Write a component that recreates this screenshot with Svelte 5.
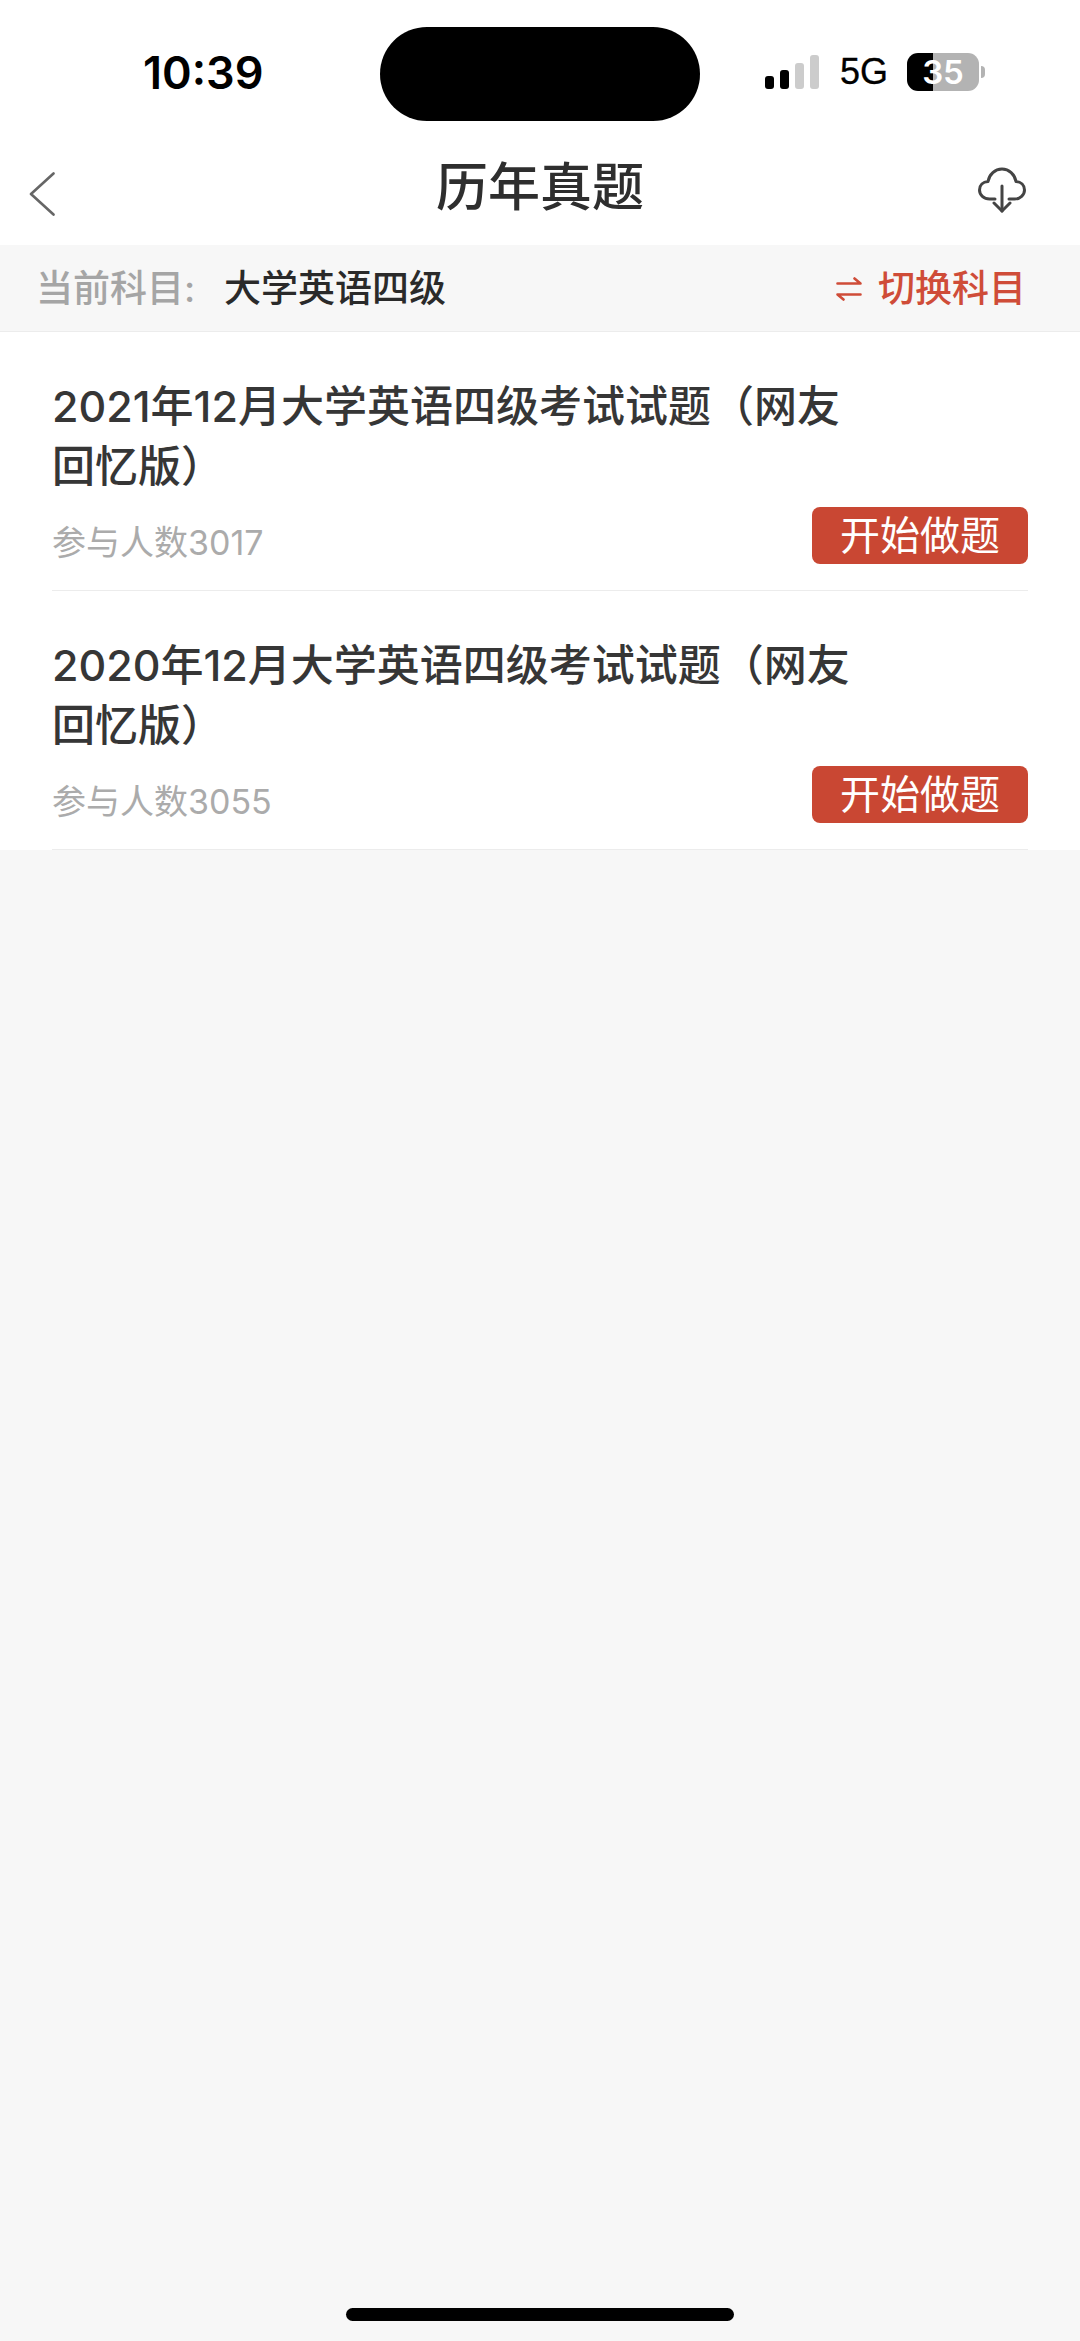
<script>
  const papers = [
    { title: '2021年12月大学英语四级考试试题（网友回忆版）', count: 3017 },
    { title: '2020年12月大学英语四级考试试题（网友回忆版）', count: 3055 }
  ];
</script>

<div class="page">
  <header class="status">
    <span class="time">10:39</span>
    <div class="island"></div>
    <div class="indicators">
      <div class="signal">
        <i class="b1 on"></i><i class="b2 on"></i><i class="b3"></i><i class="b4"></i>
      </div>
      <span class="net">5G</span>
      <div class="battery"><span>35</span></div>
      <div class="nub"></div>
    </div>
  </header>

  <nav class="nav">
    <svg class="back" width="26" height="44" viewBox="0 0 26 44" fill="none">
      <path d="M24.5 1.5 L2 22 L24.5 42.5" stroke="#666" stroke-width="2.6" stroke-linecap="round" stroke-linejoin="round" />
    </svg>
    <h1>历年真题</h1>
    <svg class="cloud" width="48" height="46" viewBox="0 0 48 46" fill="none" stroke="#444" stroke-width="3" stroke-linecap="round" stroke-linejoin="round">
      <path d="M17 32 H11.5 C5.8 32 1.5 28 1.5 23 C1.5 18.2 5 14.8 10 14.5 C11.2 7.2 17 2 24 2 C31 2 36.8 7.2 38 14.5 C43 14.8 46.5 18.2 46.5 23 C46.5 28 42.2 32 36.5 32 H31" />
      <path d="M24 19 V44" />
      <path d="M16 36 L24 44 L32 36" />
    </svg>
  </nav>

  <div class="subject">
    <span class="label">当前科目:</span>
    <span class="current">大学英语四级</span>
    <span class="switch">
      <svg width="26" height="24" viewBox="0 0 26 24" fill="none" stroke="#cf4c38" stroke-width="2.6" stroke-linecap="round" stroke-linejoin="round">
        <path d="M1.5 6.5 H24.5 L18.5 1.5" />
        <path d="M24.5 17.5 H1.5 L7.5 22.5" />
      </svg>
      切换科目
    </span>
  </div>

  <ul class="list">
    {#each papers as p}
      <li class="row">
        <div class="title">{p.title}</div>
        <div class="meta">
          <span class="count">参与人数{p.count}</span>
          <button class="start">开始做题</button>
        </div>
      </li>
    {/each}
  </ul>

  <div class="home"></div>
</div>

<style>
  :global(body) {
    margin: 0;
    background: #f7f7f7;
  }
  .page {
    width: 1080px;
    height: 2341px;
    display: flex;
    flex-direction: column;
    background: #f7f7f7;
    font-family: Inter, "Noto Sans CJK SC", sans-serif;
    overflow: hidden;
  }
  .status {
    height: 121px;
    background: #fff;
    position: relative;
    display: flex;
    align-items: flex-start;
    justify-content: space-between;
  }
  .time {
    margin: 47px 0 0 143px;
    font-size: 45px;
    line-height: 52px;
    font-weight: 600;
    color: #000;
  }
  .island {
    position: absolute;
    left: 380px;
    top: 27px;
    width: 320px;
    height: 94px;
    border-radius: 47px;
    background: #000;
  }
  .indicators {
    display: flex;
    align-items: flex-start;
    margin: 53px 95px 0 0;
  }
  .signal {
    display: flex;
    align-items: flex-end;
    gap: 6px;
    height: 34px;
    margin: 2px 21px 0 0;
  }
  .signal i {
    width: 9px;
    border-radius: 3px;
    background: #ccc;
  }
  .signal i.on { background: #000; }
  .b1 { height: 13px; }
  .b2 { height: 19px; }
  .b3 { height: 26px; }
  .b4 { height: 34px; }
  .net {
    font-family: "Liberation Sans", sans-serif;
    font-size: 36px;
    line-height: 38px;
    color: #000;
    margin-right: 19px;
    -webkit-text-stroke: 0.3px #000;
  }
  .battery {
    width: 72px;
    height: 38px;
    border-radius: 11px;
    background: linear-gradient(90deg, #000 36%, #b3b3b3 36%);
    display: flex;
    align-items: center;
    justify-content: center;
  }
  .battery span {
    font-size: 33px;
    line-height: 38px;
    font-weight: 600;
    color: #fff;
  }
  .nub {
    width: 4px;
    height: 12px;
    margin: 13px 0 0 2px;
    border-radius: 0 6px 6px 0;
    background: #b3b3b3;
  }
  .nav {
    height: 124px;
    background: #fff;
    display: grid;
    grid-template-columns: 1fr auto 1fr;
    align-items: center;
  }
  .back {
    margin: 22px 0 0 29px;
  }
  .cloud {
    justify-self: end;
    margin: 13px 54px 0 0;
  }
  h1 {
    margin: 10px 0 0;
    font-size: 52px;
    line-height: 62px;
    font-weight: 500;
    color: #2e2e2e;
  }
  .subject {
    height: 87px;
    box-sizing: border-box;
    border-bottom: 1px solid #ececec;
    display: flex;
    align-items: center;
    padding: 2px 54px 0 36px;
    font-size: 37px;
    line-height: 44px;
    font-weight: 500;
    background: #f7f7f7;
  }
  .label {
    color: #a5a5a5;
    width: 188px;
    white-space: nowrap;
  }
  .current {
    color: #2a2a2a;
  }
  .switch {
    margin-left: auto;
    display: flex;
    align-items: center;
    gap: 16px;
    color: #cf4c38;
    white-space: nowrap;
  }
  .list {
    list-style: none;
    margin: 0;
    padding: 0 52px;
    background: #fff;
  }
  .row {
    height: 259px;
    box-sizing: border-box;
    border-bottom: 1px solid #ececec;
    padding-top: 44px;
  }
  .title {
    width: 820px;
    font-size: 43px;
    line-height: 60px;
    color: #363636;
    font-weight: 500;
  }
  .meta {
    display: flex;
    justify-content: space-between;
    align-items: flex-start;
    margin-top: 11px;
  }
  .count {
    font-size: 34px;
    line-height: 40px;
    color: #ababab;
    margin-top: 16px;
  }
  .start {
    width: 216px;
    height: 57px;
    border: 0;
    padding: 0;
    border-radius: 8px;
    background: #c94733;
    color: #fff;
    font: inherit;
    font-size: 40px;
    line-height: 57px;
  }
  .home {
    width: 388px;
    height: 13px;
    border-radius: 7px;
    background: #000;
    margin: auto auto 20px;
  }
</style>
